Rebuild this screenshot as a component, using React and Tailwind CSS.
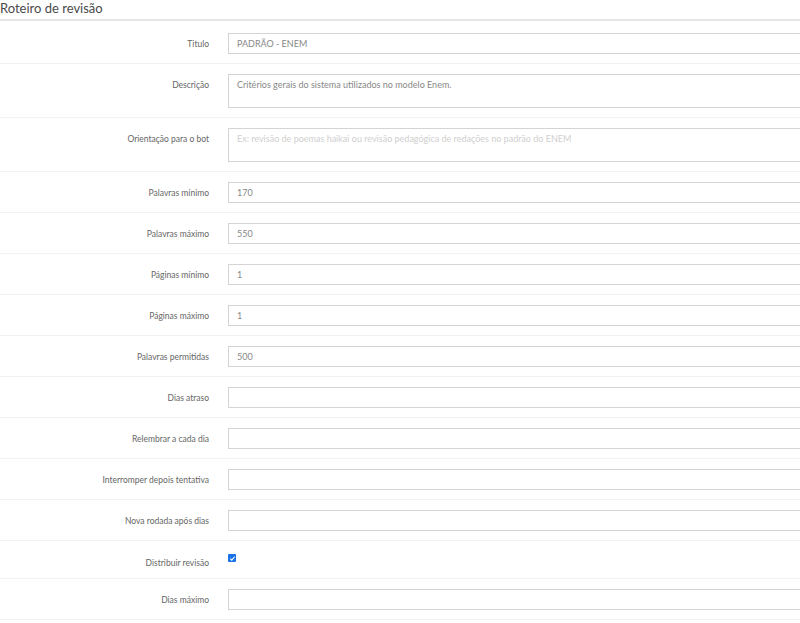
import React from "react";

const font = { fontFamily: "Lato, 'Open Sans', sans-serif" };

function Row({ label, children, alignTop }) {
  return (
    <div className="flex border-b border-[#f2f2f2] pt-[10px] pb-[9px]">
      <div
        className={`w-[210px] shrink-0 pr-[1px] text-right text-[8.5px] leading-[12px] text-[#666] ${
          alignTop ? "pt-[5px]" : "flex items-center justify-end"
        }`}
      >
        {label}
      </div>
      <div className="ml-[18px] w-[590px] shrink-0">{children}</div>
    </div>
  );
}

function Field({ value = "", placeholder = "" }) {
  return (
    <div className="flex h-[21px] items-center border border-[#d4d4d4] bg-white px-[8px] text-[9px] leading-[12px] text-[#888]">
      {value ? value : <span className="text-[#c8c8c8]">{placeholder}</span>}
    </div>
  );
}

function Area({ value = "", placeholder = "" }) {
  return (
    <div className="h-[34px] border border-[#d4d4d4] bg-white px-[8px] pt-[4px] text-[9px] leading-[12px] text-[#888]">
      {value ? value : <span className="text-[#cfcfcf]">{placeholder}</span>}
    </div>
  );
}

export default function App() {
  const rows = [
    ["Palavras mínimo", "170"],
    ["Palavras máximo", "550"],
    ["Páginas mínimo", "1"],
    ["Páginas máximo", "1"],
    ["Palavras permitidas", "500"],
    ["Dias atraso", ""],
    ["Relembrar a cada dia", ""],
    ["Interromper depois tentativa", ""],
    ["Nova rodada após dias", ""],
  ];
  return (
    <div className="h-[623px] w-[800px] overflow-hidden bg-white" style={font}>
      <div className="border-b-2 border-[#e6e6e6] pb-[2px] text-[13px] leading-[17px] text-[#4a4a4a]">
        Roteiro de revisão
      </div>
      <div className="pt-[2px]">
        <Row label="Titulo">
          <Field value="PADRÃO - ENEM" />
        </Row>
        <Row label="Descrição" alignTop>
          <Area value="Critérios gerais do sistema utilizados no modelo Enem." />
        </Row>
        <Row label="Orientação para o bot" alignTop>
          <Area placeholder="Ex: revisão de poemas haikai ou revisão pedagógica de redações no padrão do ENEM" />
        </Row>
        {rows.map(([l, v]) => (
          <Row key={l} label={l}>
            <Field value={v} />
          </Row>
        ))}
        <div className="flex h-[38px] border-b border-[#f2f2f2]">
          <div className="w-[210px] shrink-0 pr-[1px] pt-[16px] text-right text-[8.5px] leading-[12px] text-[#666]">
            Distribuir revisão
          </div>
          <div className="ml-[18px] pt-[13px]">
            <div className="flex h-[8px] w-[8px] items-center justify-center rounded-[1px] bg-[#1a73e8]">
              <svg viewBox="0 0 8 8" className="h-[7px] w-[7px]">
                <path d="M1.5 4.2 L3.2 5.8 L6.5 2" stroke="white" strokeWidth="1.3" fill="none" />
              </svg>
            </div>
          </div>
        </div>
        <Row label="Dias máximo">
          <Field />
        </Row>
      </div>
    </div>
  );
}
